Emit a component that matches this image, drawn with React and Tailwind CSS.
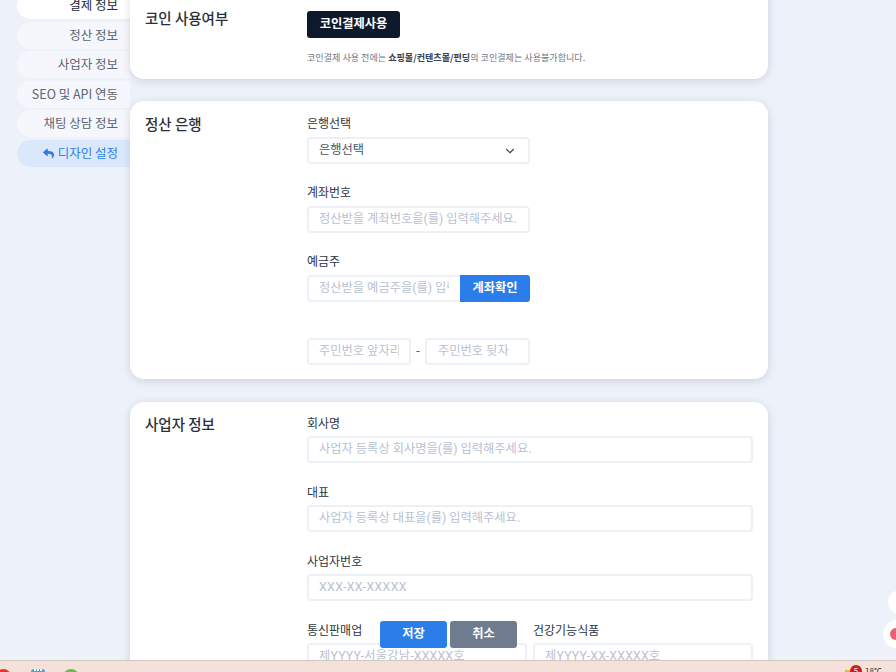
import { FaReply } from 'react-icons/fa';
import { LuChevronDown } from 'react-icons/lu';

const font = { fontFamily: '"Noto Sans CJK KR", sans-serif' };
const inputFont = { fontFamily: 'Roboto, "Noto Sans CJK KR", sans-serif' };

function SideItem({ label, active, current }) {
  return (
    <div
      className={`h-[27px] mb-[2.5px] pr-[12px] rounded-l-[14px] flex items-center justify-end gap-1 text-[12.5px] ${
        current
          ? 'bg-[#dbe8fb] text-[#2b7de9]'
          : active
          ? 'bg-white text-[#222b36]'
          : 'bg-[#f5f7fc] text-[#5c6570]'
      }`}
    >
      {current && <FaReply className="w-[11px] h-[11px]" />}
      {label}
    </div>
  );
}

function TextBox({ placeholder, className = '' }) {
  return (
    <div
      style={inputFont}
      className={`h-[27px] pl-[10px] pr-[10px] flex items-center border-2 border-[#edf1f7] rounded-[4px] text-[12.25px] text-[#b8c1d0] ${className}`}
    >
      <div className="w-full overflow-hidden whitespace-nowrap">{placeholder}</div>
    </div>
  );
}

function Field({ label, placeholder, className = '', boxClass = '', tight }) {
  return (
    <div className={className}>
      <div className={`h-5 leading-5 text-[12px] text-[#2d3540] ${tight ? 'mb-[3px]' : 'mb-1'}`}>{label}</div>
      <TextBox placeholder={placeholder} className={boxClass} />
    </div>
  );
}

function Card({ title, className = '', children }) {
  return (
    <section
      className={`bg-white rounded-[14px] shadow-[0_2px_8px_rgba(60,70,100,0.18)] pl-[15px] pr-[15px] flex ${className}`}
    >
      <h2 className="w-[162px] shrink-0 text-[14.5px] font-medium text-[#2b3038]">{title}</h2>
      <div className="flex-1 min-w-0">{children}</div>
    </section>
  );
}

export default function App() {
  return (
    <div className="relative w-[896px] h-[672px] overflow-hidden bg-[#edf1f9]" style={font}>
      <div className="h-[660px] overflow-hidden flex">
        {/* Sidebar */}
        <aside className="w-[130px] shrink-0 pl-[17px] -mt-[7.75px]">
          <SideItem label="결제 정보" active />
          <SideItem label="정산 정보" />
          <SideItem label="사업자 정보" />
          <SideItem label="SEO 및 API 연동" />
          <SideItem label="채팅 상담 정보" />
          <SideItem label="디자인 설정" current />
        </aside>

        {/* Cards */}
        <main className="w-[638px] shrink-0 -mt-[20px] flex flex-col gap-[22px]">
          <Card title="코인 사용여부" className="pt-[27px] pb-[15px]">
            <div className="pt-[4px]">
              <div className="w-[93px] h-[27px] pb-[2px] bg-[#0e1a2b] text-white rounded-[3px] flex items-center justify-center text-[12.25px] font-semibold">
                코인결제사용
              </div>
              <p className="mt-3 h-[14px] leading-[14px] text-[9.07px] text-[#6d7786]">
                코인결제 사용 전에는 <b className="text-[#3a4350]">쇼핑몰/컨텐츠몰/펀딩</b>의 코인결제는 사용불가합니다.
              </p>
            </div>
          </Card>

          <Card title="정산 은행" className="pt-3 pb-[14px]">
            <div className="w-[223px]">
              <div className="mb-[18px]">
                <div className="h-5 leading-5 mb-1 text-[12px] text-[#2d3540]">은행선택</div>
                <div className="h-[27px] pl-[10px] pr-[11px] pb-[2px] flex items-center justify-between border-2 border-[#edf1f7] rounded-[4px] text-[12.25px] text-[#4b5460]">
                  은행선택
                  <LuChevronDown className="w-[14px] h-[14px] mt-[2px] text-[#444c58]" />
                </div>
              </div>
              <Field label="계좌번호" placeholder="정산받을 계좌번호을(를) 입력해주세요." className="mb-[18px]" />
              <div className="mb-9">
                <div className="h-5 leading-5 mb-1 text-[12px] text-[#2d3540]">예금주</div>
                <div className="flex">
                  <TextBox placeholder="정산받을 예금주을(를) 입력해주세요." className="flex-1 min-w-0 rounded-r-none border-r-0 pr-[11px] pb-[1px]" />
                  <div className="w-[70px] h-[27px] pb-[2px] shrink-0 bg-[#2b7de9] text-white rounded-r-[3px] flex items-center justify-center text-[12.25px] font-semibold">
                    계좌확인
                  </div>
                </div>
              </div>
              <div className="flex items-center">
                <TextBox placeholder="주민번호 앞자리" className="w-[104px] pb-[1px]" />
                <span className="w-[14px] pb-[4px] text-center text-[13px] text-[#5c6570]">-</span>
                <TextBox placeholder="주민번호 뒷자" className="w-[105px] pl-[11px] pb-[1px]" />
              </div>
            </div>
          </Card>

          <Card title="사업자 정보" className="mt-[1px] pt-[11px] pb-10">
            <Field tight label="회사명" placeholder="사업자 등록상 회사명을(를) 입력해주세요." className="mb-[19px]" />
            <Field tight label="대표" placeholder="사업자 등록상 대표을(를) 입력해주세요." className="mb-[19px]" />
            <Field tight label="사업자번호" placeholder="XXX-XX-XXXXX" boxClass="tracking-[0.4px]" className="mb-[19px]" />
            <div className="grid grid-cols-2 gap-[6px]">
              <Field tight label="통신판매업" placeholder="제YYYY-서울강남-XXXXX호" boxClass="tracking-[0.2px]" />
              <Field tight label="건강기능식품" placeholder="제YYYY-XX-XXXXX호" boxClass="tracking-[0.2px]" />
            </div>
          </Card>
        </main>
      </div>

      {/* Floating save bar */}
      <div className="absolute left-[380px] top-[621px] flex gap-[3px]">
        <div className="w-[67px] h-[27px] pb-[2px] bg-[#2b7de9] text-white rounded-[3px] flex items-center justify-center text-[12.25px] font-semibold">저장</div>
        <div className="w-[67px] h-[27px] pb-[2px] bg-[#6f7c90] text-white rounded-[3px] flex items-center justify-center text-[12.25px] font-semibold">취소</div>
      </div>

      {/* Floating round buttons */}
      <div className="absolute left-[888px] top-[590px] w-6 h-6 rounded-full bg-white" />
      <div className="absolute left-[883px] top-[620px] w-[28px] h-[28px] rounded-full bg-white flex items-center justify-center">
        <div className="w-[14px] h-3 rounded-full bg-[#ec5f74]" />
      </div>

      {/* Taskbar */}
      <div className="absolute left-0 right-0 top-[660px] h-3 bg-[#f4e1d9] border-t border-[#d6c6bf] overflow-hidden">
        <div className="absolute -left-[4px] top-[8px] w-[15px] h-[15px] rounded-full bg-[#e5352b]" />
        <div className="absolute left-[31px] top-[8px] w-[14px] h-[14px] rounded-t-[3px] bg-[#3fa9dc] flex justify-center gap-[1px]">
          <div className="w-[2px] h-[2px] bg-white" />
          <div className="w-[2px] h-[2px] bg-white" />
          <div className="w-[2px] h-[2px] bg-white" />
        </div>
        <div className="absolute left-[63px] top-[8px] w-[16px] h-[16px] rounded-full bg-[#6cbd45]" />
        <div className="absolute left-[845px] top-[9px] w-[5px] h-[5px] bg-[#e8b830]" />
        <div className="absolute left-[850px] top-[4px] w-3 h-3 rounded-full bg-[#c8201a] text-white text-[8px] leading-3 text-center">5</div>
        <div className="absolute left-[865px] top-[4px] text-[8px] leading-3 text-[#333]">18°C</div>
      </div>
    </div>
  );
}
